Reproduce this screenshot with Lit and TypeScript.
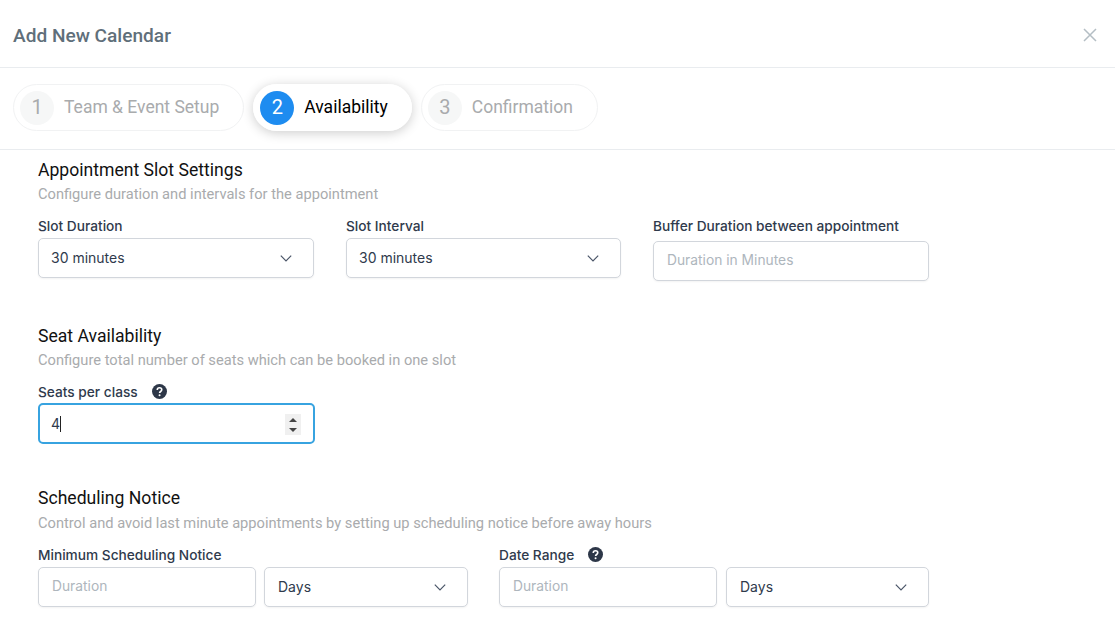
import { LitElement, html, css } from "lit";
import { customElement } from "lit/decorators.js";

const chevron = html`<svg class="chev" width="14" height="14" viewBox="0 0 14 14" fill="none" stroke="#4a5568" stroke-width="1.2"><path d="M1.8 4.6 7 9.8l5.2-5.2"/></svg>`;
const help = html`<svg class="help" width="15" height="15" viewBox="0 0 14 14"><circle cx="7" cy="7" r="7" fill="#2d3748"/><path d="M4.9 5.5c0-1.2.9-2 2.1-2s2.1.8 2.1 1.9c0 1.6-2 1.6-2 3" fill="none" stroke="#fff" stroke-width="1.5"/><circle cx="7.05" cy="10.4" r=".95" fill="#fff"/></svg>`;

@customElement("app-root")
export class AppRoot extends LitElement {
  static styles = css`
    :host { display: block; width: 1115px; height: 630px; overflow: hidden; background: #fff; font-family: Inter, "Noto Sans", sans-serif; color: #2d3748; }
    .head { height: 67px; box-sizing: border-box; padding: 3px 17px 0 13px; display: flex; align-items: center; justify-content: space-between; }
    .title { font: 500 19.1px Roboto, sans-serif; color: #5f6f7a; }
    .steps { height: 83px; box-sizing: border-box; border-top: 1px solid #e9ecef; border-bottom: 1px solid #e9ecef; display: flex; align-items: center; gap: 9px; padding: 0 13px 2px; }
    .pill { height: 47px; box-sizing: border-box; border: 1px solid #f1f2f3; border-radius: 24px; display: flex; align-items: center; padding: 0 24px 2px 6px; font: 400 17.5px Roboto, sans-serif; color: #a9abad; gap: 10px; }
    .pill.active { border-color: #fff; color: #000; box-shadow: 0 2px 12px rgba(0,0,0,.2); padding-right: 23px; }
    .num { width: 34px; height: 34px; box-sizing: border-box; margin-top: 2px; padding-bottom: 2px; border-radius: 50%; background: #f6f7f7; display: flex; align-items: center; justify-content: center; font-size: 20px; }
    .active .num { background: #1e8cf0; color: #fff; }
    .body { padding: 9px 0 0 38px; width: 891px; }
    h2 { margin: -1px 0 0; font: 400 17.6px/24px Roboto, sans-serif; color: #111; }
    .desc { font: 400 14.67px/20px Roboto, sans-serif; color: #a9abad; margin-top: 2px; }
    .row3 { display: grid; grid-template-columns: 276px 275px 276px; column-gap: 32px; margin-top: 11px; }
    .label { font-size: 13.7px; line-height: 22px; font-weight: 500; color: #2f3a4c; display: flex; align-items: flex-start; gap: 14px; height: 23px; }
    .box { height: 40px; box-sizing: border-box; border: 1px solid #d2d6dc; border-radius: 5px; display: flex; align-items: center; justify-content: space-between; padding: 0 20px 2px 13px; font-size: 14px; color: #2f3a4c; box-shadow: 0 1px 2px rgba(0,0,0,.05); background: #fff; }
    .chev { margin-top: 2px; }
    .help { margin-top: 3px; }
    .tight { padding-left: 12px; }
    .ph { color: #aeb6bd; font-size: 13.8px; }
    .third .label { margin-bottom: 3px; }
    .section2 { margin-top: 44px; }
    .seats { margin-top: 11px; height: 22px; }
    .focus { width: 277px; height: 41px; border: 2px solid #37a3e0; padding: 0 12px 0 11px; box-shadow: none; }
    .val { display: flex; align-items: center; }
    .caret { width: 1px; height: 16px; background: #222; }
    .spin { width: 16px; height: 21px; margin-top: 2px; background: #f0f0f0; display: flex; flex-direction: column; align-items: center; justify-content: center; gap: 6px; }
    .up { width: 0; height: 0; border-left: 4px solid transparent; border-right: 4px solid transparent; border-bottom: 4px solid #444; }
    .down { width: 0; height: 0; border-left: 4px solid transparent; border-right: 4px solid transparent; border-top: 4px solid #444; }
    .section3 { margin-top: 43px; }
    .section3 .desc { margin-top: 3px; }
    .row4 { display: grid; grid-template-columns: 430px 430px; column-gap: 31px; margin-top: 11px; }
    .pair { display: grid; grid-template-columns: 218px 204px; column-gap: 8px; }
    .pair2 { grid-template-columns: 218px 203px; column-gap: 9px; }
  `;

  render() {
    return html`
      <div class="head">
        <div class="title">Add New Calendar</div>
        <svg width="16" height="16" viewBox="0 0 16 16" stroke="#b4bec4" stroke-width="1.5" fill="none"><path d="M2 2l12 12M14 2 2 14"/></svg>
      </div>
      <div class="steps">
        <div class="pill"><span class="num">1</span>Team &amp; Event Setup</div>
        <div class="pill active"><span class="num">2</span>Availability</div>
        <div class="pill"><span class="num">3</span>Confirmation</div>
      </div>
      <div class="body">
        <h2>Appointment Slot Settings</h2>
        <div class="desc">Configure duration and intervals for the appointment</div>
        <div class="row3">
          <div><div class="label">Slot Duration</div><div class="box tight">30 minutes ${chevron}</div></div>
          <div><div class="label">Slot Interval</div><div class="box tight">30 minutes ${chevron}</div></div>
          <div class="third"><div class="label">Buffer Duration between appointment</div><div class="box ph">Duration in Minutes</div></div>
        </div>
        <div class="section2">
          <h2>Seat Availability</h2>
          <div class="desc">Configure total number of seats which can be booked in one slot</div>
          <div class="label seats">Seats per class ${help}</div>
          <div class="box focus"><span class="val">4<span class="caret"></span></span><span class="spin"><span class="up"></span><span class="down"></span></span></div>
        </div>
        <div class="section3">
          <h2>Scheduling Notice</h2>
          <div class="desc">Control and avoid last minute appointments by setting up scheduling notice before away hours</div>
          <div class="row4">
            <div><div class="label">Minimum Scheduling Notice</div>
              <div class="pair"><div class="box ph">Duration</div><div class="box">Days ${chevron}</div></div></div>
            <div><div class="label">Date Range ${help}</div>
              <div class="pair pair2"><div class="box ph">Duration</div><div class="box">Days ${chevron}</div></div></div>
          </div>
        </div>
      </div>
    `;
  }
}
